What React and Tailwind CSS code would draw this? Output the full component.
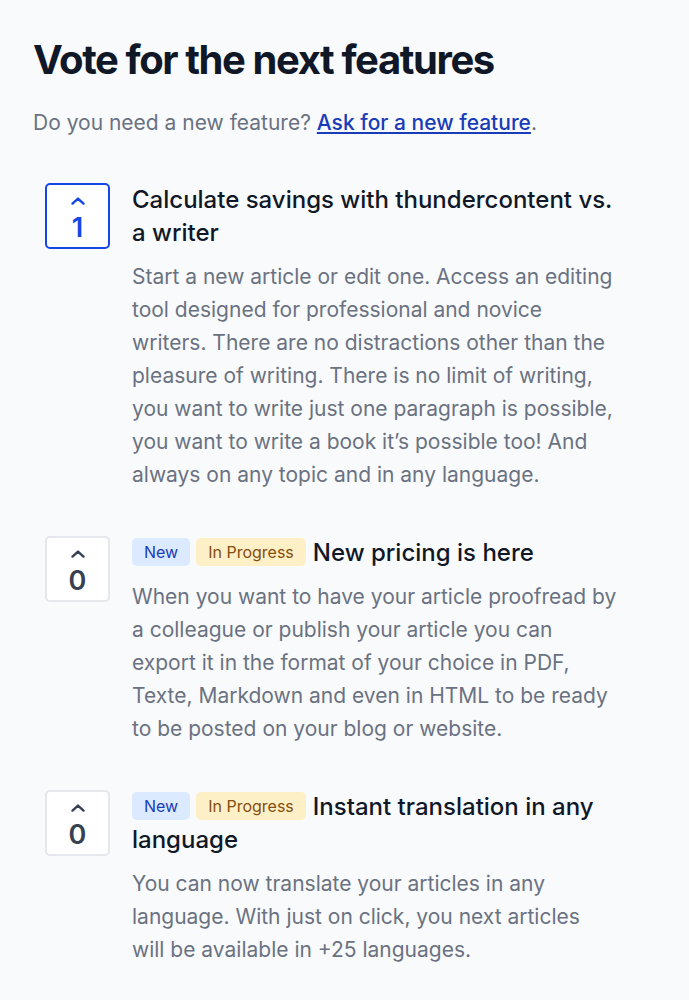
import React from 'react';

const features = [
  {
    votes: 1,
    voted: true,
    badges: false,
    title: 'Calculate savings with thundercontent vs. a writer',
    body: 'Start a new article or edit one. Access an editing tool designed for professional and novice writers. There are no distractions other than the pleasure of writing. There is no limit of writing, you want to write just one paragraph is possible, you want to write a book it’s possible too! And always on any topic and in any language.',
  },
  {
    votes: 0,
    voted: false,
    badges: true,
    title: 'New pricing is here',
    body: 'When you want to have your article proofread by a colleague or publish your article you can export it in the format of your choice in PDF, Texte, Markdown and even in HTML to be ready to be posted on your blog or website.',
  },
  {
    votes: 0,
    voted: false,
    badges: true,
    title: 'Instant translation in any language',
    body: 'You can now translate your articles in any language. With just on click, you next articles will be available in +25 languages.',
  },
];

function VoteBox({ votes, voted }) {
  return (
    <button
      className={
        'flex h-[66px] w-[65px] shrink-0 flex-col items-center rounded-[5px] border-2 bg-white ' +
        (voted ? 'border-blue-700 text-blue-700' : 'border-gray-200 text-gray-700')
      }
    >
      <svg width="16" height="8" viewBox="0 0 16 8" fill="none" className="mt-[12px]">
        <path d="M2.5 6.6L8 1.6l5.5 5" stroke="currentColor" strokeWidth="2.4" strokeLinecap="round" strokeLinejoin="round" />
      </svg>
      <span className="mt-[9px] text-[27px] font-semibold leading-[27px]">{votes}</span>
    </button>
  );
}

function Feature({ f }) {
  return (
    <div className="flex gap-[22px]">
      <VoteBox votes={f.votes} voted={f.voted} />
      <div className="flex-1 pr-[39px]">
        <h3 className="max-w-[484px] text-[24px] font-medium leading-[33px] text-gray-900">
          {f.badges && (
            <>
              <span className="mr-[6px] inline-block rounded-[5px] bg-blue-100 px-[12px] align-[3px] text-[16px] leading-[28px] font-normal text-blue-800">
                New
              </span>
              <span className="mr-[7px] inline-block rounded-[5px] bg-[#fdf0c6] px-[12px] align-[3px] text-[16px] leading-[28px] font-normal text-[#854d0e]">
                In Progress
              </span>
            </>
          )}
          {f.title}
        </h3>
        <p className="mt-[11px] text-[21px] leading-[33px] text-gray-500">{f.body}</p>
      </div>
    </div>
  );
}

export default function App() {
  return (
    <div className="min-h-screen bg-gray-50 px-[33px] pt-[34px] pb-10" style={{ fontFamily: 'Inter, "Noto Sans", sans-serif' }}>
      <h1 className="text-[40px] font-bold leading-[52px] tracking-[-0.035em] text-gray-900">Vote for the next features</h1>
      <p className="mt-[22px] text-[21px] leading-[30px] text-gray-500">
        Do you need a new feature?{' '}
        <a href="#" className="font-medium text-blue-800 underline">
          Ask for a new feature
        </a>
        .
      </p>
      <div className="mt-[45px] flex flex-col gap-[45px] pl-[12px]">
        {features.map((f, i) => (
          <Feature key={i} f={f} />
        ))}
      </div>
    </div>
  );
}
